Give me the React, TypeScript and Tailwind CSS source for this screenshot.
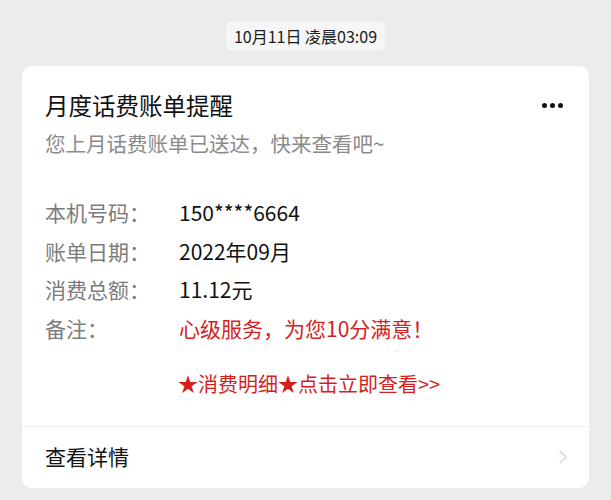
import { ChevronRight } from "lucide-react"

const rows = [
  { label: "本机号码：", value: "150****6664", red: false },
  { label: "账单日期：", value: "2022年09月", red: false },
  { label: "消费总额：", value: "11.12元", red: false },
  { label: "备注：", value: "心级服务，为您10分满意！", red: true },
]

export default function App() {
  return (
    <div
      className="w-[611px] h-[500px] bg-[#ececec] pt-[22px] px-[22px] overflow-hidden"
      style={{ fontFamily: '"Noto Sans CJK SC", "Noto Sans", sans-serif' }}
    >
      <div className="flex justify-center">
        <div className="bg-[#f6f6f6] rounded-[4px] px-[8px] h-[28px] flex items-center text-[16px] text-[#1a1a1a]">
          10月11日 凌晨03:09
        </div>
      </div>

      <div className="mt-[16px] w-[567px] bg-white rounded-[10px]">
        <div className="px-[23px] pt-[22px] pb-[27px]">
          <div className="flex items-center justify-between">
            <h1 className="text-[23.5px] leading-[34px] text-[#111]">月度话费账单提醒</h1>
            <div className="flex gap-[3px] mr-[3px]">
              <span className="w-[5px] h-[5px] rounded-full bg-[#111]"></span>
              <span className="w-[5px] h-[5px] rounded-full bg-[#111]"></span>
              <span className="w-[5px] h-[5px] rounded-full bg-[#111]"></span>
            </div>
          </div>
          <p className="mt-[6px] text-[20.5px] leading-[30px] text-[#8a8a8a]">您上月话费账单已送达，快来查看吧~</p>

          <div className="mt-[39px] flex flex-col gap-[8.5px]">
            {rows.map((r) => (
              <div key={r.label} className="flex text-[21px] leading-[30px]">
                <span className="w-[134px] text-[#7c7c7c]">{r.label}</span>
                <span className={r.red ? "text-[#d41f1f]" : "text-[#111]"}>{r.value}</span>
              </div>
            ))}
          </div>

          <div className="mt-[26px] pl-[133px] text-[20px] leading-[30px] text-[#d41f1f]">
            ★消费明细★点击立即查看&gt;&gt;
          </div>
        </div>

        <div className="border-t border-[#eeeeee] h-[62px] pl-[23px] pr-[14px] flex items-center justify-between">
          <span className="text-[21px] text-[#111]">查看详情</span>
          <ChevronRight className="w-[24px] h-[24px] text-[#d0d0d0]" strokeWidth={1.2} />
        </div>
      </div>
    </div>
  )
}
